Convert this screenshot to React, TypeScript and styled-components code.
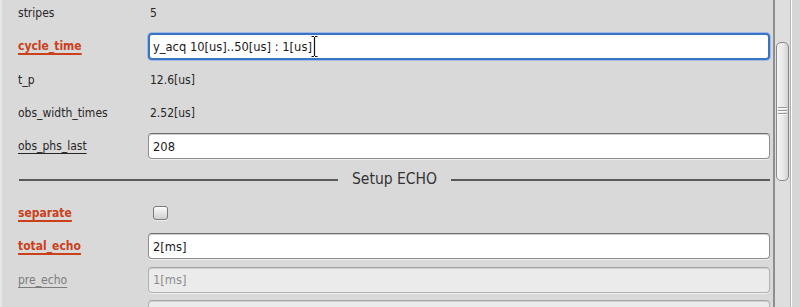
import React from "react";
import styled, { createGlobalStyle } from "styled-components";

const GlobalStyle = createGlobalStyle`
  html, body { margin: 0; padding: 0; background: #d9d9d9; overflow: hidden; }
  * { box-sizing: border-box; }
`;

const Window = styled.div`
  display: flex;
  width: 800px;
  height: 307px;
  background: #d9d9d9;
  font-family: "DejaVu Sans Condensed", "DejaVu Sans", sans-serif;
  border-left: 2px solid #e6e6e6;
`;

const Content = styled.div`
  flex: 1;
  overflow: hidden;
  padding: 0 3px 0 16px;
`;

const Inner = styled.div`
  margin-top: -3.5px;
`;

const Row = styled.div`
  display: grid;
  grid-template-columns: 130px 1fr;
  align-items: center;
  height: 33.3px;
`;

type Tone = "plain" | "required" | "link" | "disabled";

const labelColor: Record<Tone, string> = {
  plain: "#262626",
  required: "#cc3f1b",
  link: "#262626",
  disabled: "#7c7c7c",
};

const Label = styled.span<{ $tone: Tone }>`
  font-size: 12px;
  color: ${(p) => labelColor[p.$tone]};
  font-weight: ${(p) => (p.$tone === "required" ? 700 : 400)};
  text-decoration: ${(p) => (p.$tone === "plain" ? "none" : "underline")};
  text-underline-offset: 3px;
  text-decoration-thickness: ${(p) => (p.$tone === "required" ? "2px" : "1px")};
`;

const Value = styled.span`
  font-size: 12px;
  color: #262626;
  padding-left: 2px;
`;

const Field = styled.div<{ $state: "normal" | "focus" | "disabled" }>`
  position: relative;
  height: ${(p) => (p.$state === "focus" ? "27px" : "26px")};
  display: flex;
  align-items: center;
  padding-left: ${(p) => (p.$state === "focus" ? "3px" : "4px")};
  font-size: 12.8px;
  border-radius: 4px;
  background: ${(p) => (p.$state === "disabled" ? "#ebebeb" : "#ffffff")};
  color: ${(p) => (p.$state === "disabled" ? "#8c8c8c" : "#1a1a1a")};
  border: ${(p) =>
    p.$state === "focus"
      ? "2px solid #3b74c2"
      : p.$state === "disabled"
      ? "1px solid #b2b2b2"
      : "1px solid #8c8c8c"};
  border-top-color: ${(p) =>
    p.$state === "focus" ? "#3b74c2" : p.$state === "disabled" ? "#a6a6a6" : "#6f6f6f"};
  box-shadow: ${(p) =>
    p.$state === "focus"
      ? "0 0 0 1px #9dbbe6"
      : p.$state === "disabled"
      ? "inset 0 1px 0 #d0d0d0, 0 1px 0 #f0f0f0"
      : "inset 0 1px 0 #cfcfcf, 0 1px 0 #efefef"};
  white-space: nowrap;
`;

const Caret = styled.svg`
  position: absolute;
  left: 161px;
  top: 1px;
`;

const Check = styled.div`
  width: 15px;
  height: 14px;
  margin-left: 5px;
  border-radius: 3px;
  border: 1px solid #7a7a7a;
  background: linear-gradient(#fbfbfb, #cfcfcf);
  box-shadow: inset 0 1px 0 #ffffff, 0 1px 0 #eeeeee;
`;

const Divider = styled.div`
  display: flex;
  align-items: center;
  gap: 14px;
  height: 33.3px;
  padding-left: 1px;
`;

const Line = styled.div`
  flex: 1;
  height: 2px;
  background: #5a5a5a;
`;

const DividerTitle = styled.span`
  font-size: 15.5px;
  color: #333333;
  padding-bottom: 1px;
`;

const Scrollbar = styled.div`
  width: 18px;
  height: 100%;
  border-left: 2px solid #8e8e8e;
  border-right: 1px solid #b4b4b4;
  background: #dedede;
  padding: 42px 1px 0 1px;
`;

const Thumb = styled.div`
  display: flex;
  flex-direction: column;
  justify-content: center;
  align-items: stretch;
  gap: 2px;
  height: 139px;
  border: 1px solid #8a8a8a;
  border-radius: 5px;
  background: linear-gradient(90deg, #f4f4f4, #e8e8e8 60%, #cfcfcf);
  padding: 0 1px 3px;
`;

const Grip = styled.div`
  height: 1px;
  background: #9a9a9a;
  box-shadow: 0 1px 0 #fafafa;
`;

const Edge = styled.div`
  width: 9px;
  height: 100%;
  border-left: 1px solid #ffffff;
  background: #d6d6d6;
`;

type Item =
  | { kind: "value"; label: string; tone: Tone; value: string }
  | { kind: "input"; label: string; tone: Tone; value: string; state: "normal" | "focus" | "disabled" }
  | { kind: "check"; label: string; tone: Tone }
  | { kind: "divider"; title: string };

const items: Item[] = [
  { kind: "value", label: "stripes", tone: "plain", value: "5" },
  { kind: "input", label: "cycle_time", tone: "required", value: "y_acq 10[us]..50[us] : 1[us]", state: "focus" },
  { kind: "value", label: "t_p", tone: "plain", value: "12.6[us]" },
  { kind: "value", label: "obs_width_times", tone: "plain", value: "2.52[us]" },
  { kind: "input", label: "obs_phs_last", tone: "link", value: "208", state: "normal" },
  { kind: "divider", title: "Setup ECHO" },
  { kind: "check", label: "separate", tone: "required" },
  { kind: "input", label: "total_echo", tone: "required", value: "2[ms]", state: "normal" },
  { kind: "input", label: "pre_echo", tone: "disabled", value: "1[ms]", state: "disabled" },
  { kind: "input", label: "post_echo", tone: "disabled", value: "1[ms]", state: "disabled" },
];

export default function App() {
  return (
    <>
      <GlobalStyle />
      <Window>
        <Content>
          <Inner>
            {items.map((it, i) => {
              if (it.kind === "divider") {
                return (
                  <Divider key={i}>
                    <Line />
                    <DividerTitle>{it.title}</DividerTitle>
                    <Line />
                  </Divider>
                );
              }
              return (
                <Row key={i}>
                  <Label $tone={it.tone}>{it.label}</Label>
                  {it.kind === "value" && <Value>{it.value}</Value>}
                  {it.kind === "check" && <Check />}
                  {it.kind === "input" && (
                    <Field $state={it.state}>
                      {it.value}
                      {it.state === "focus" && (
                        <Caret width="7" height="21" viewBox="0 0 7 21">
                          <path d="M0.5 0.5h2.5M4 0.5h2.5M3.5 1v19M0.5 20.5h2.5M4 20.5h2.5" stroke="#111" strokeWidth="1.2" fill="none" />
                        </Caret>
                      )}
                    </Field>
                  )}
                </Row>
              );
            })}
          </Inner>
        </Content>
        <Scrollbar>
          <Thumb>
            <Grip />
            <Grip />
            <Grip />
          </Thumb>
        </Scrollbar>
        <Edge />
      </Window>
    </>
  );
}
